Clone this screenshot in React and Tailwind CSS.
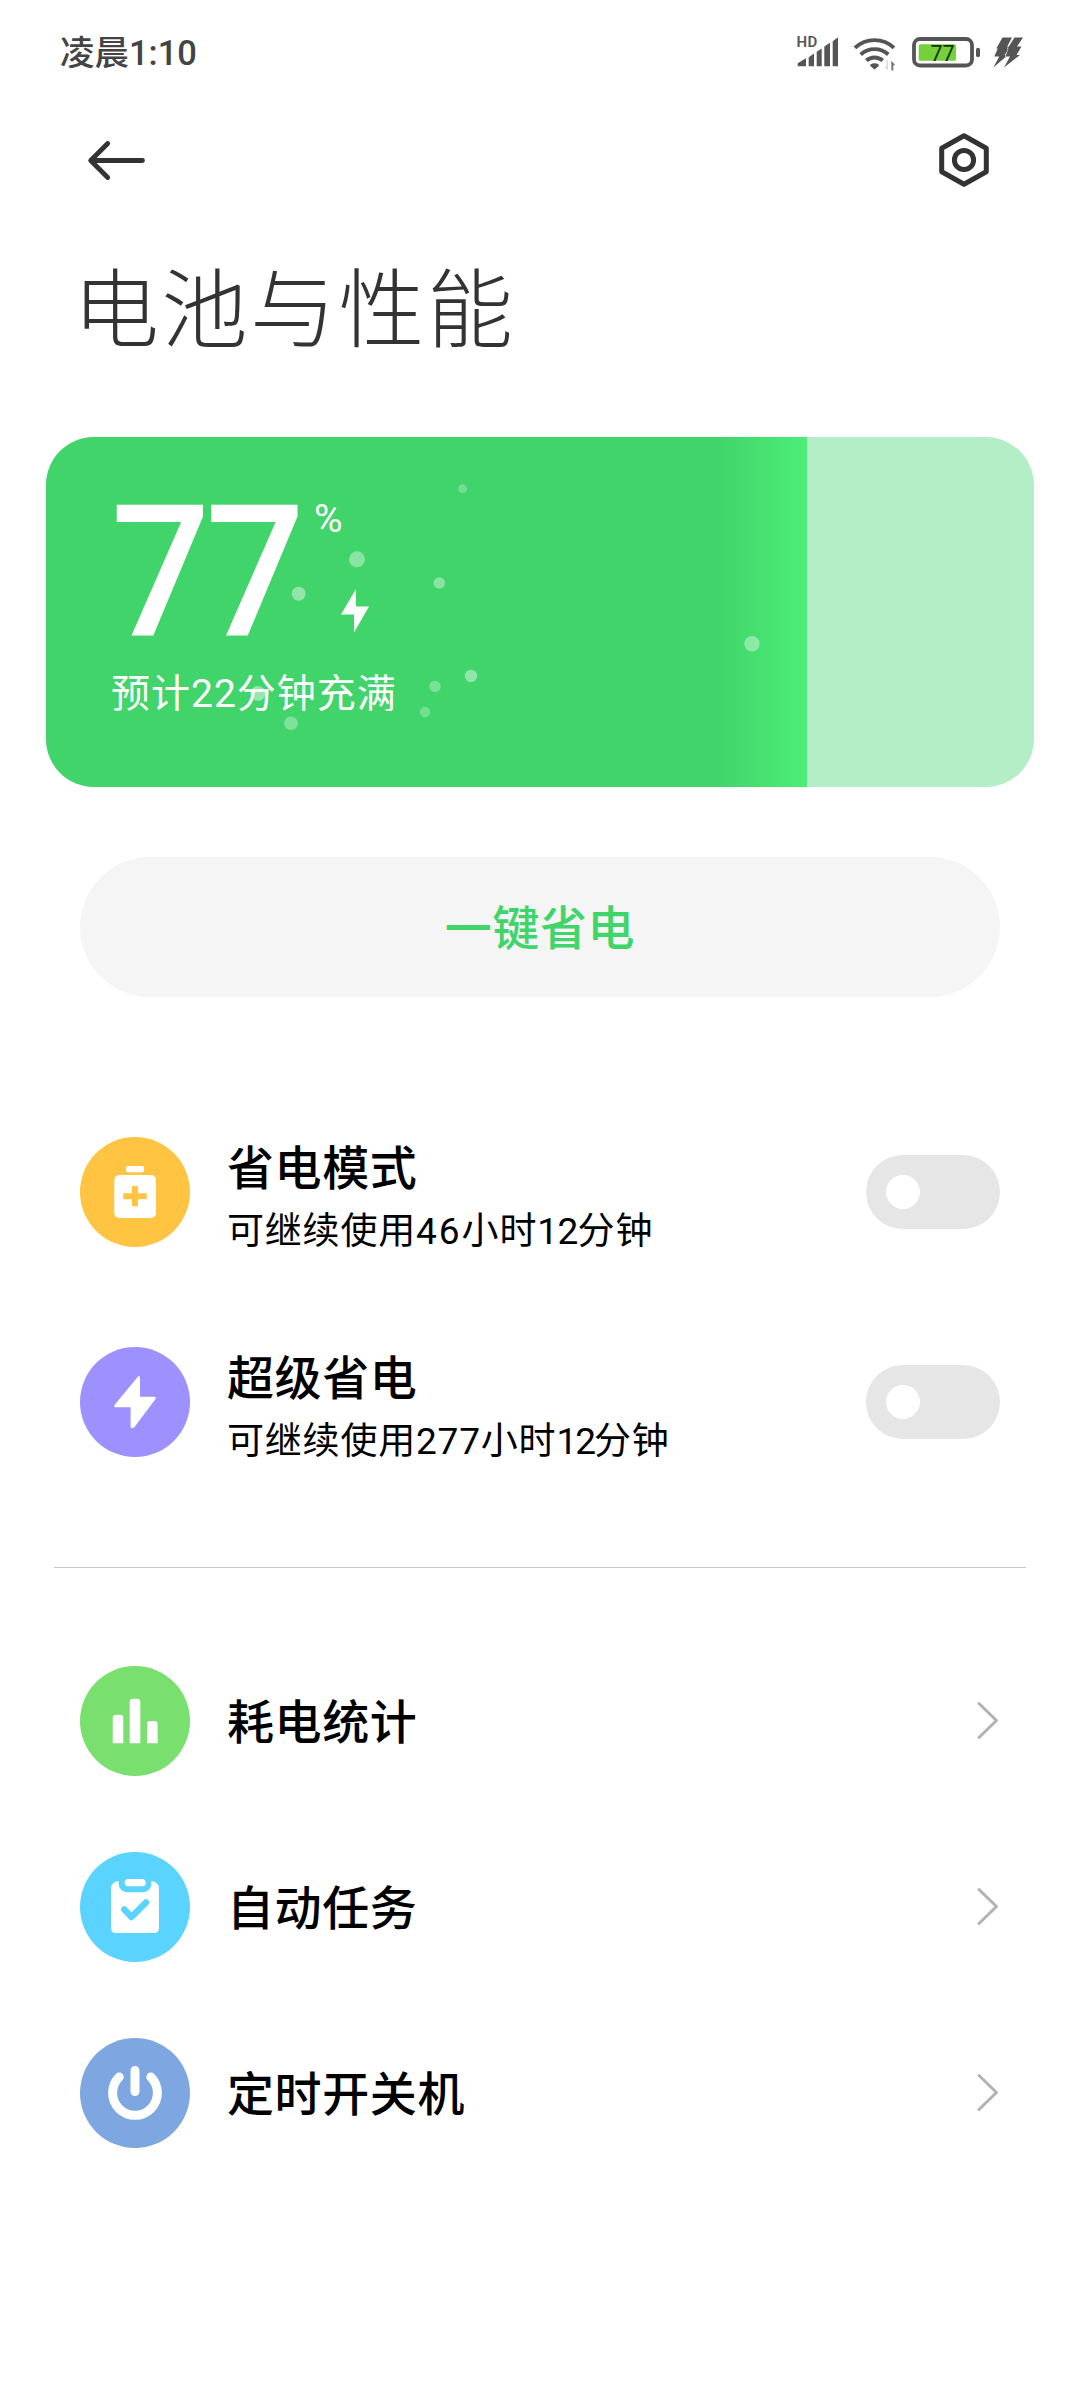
import { useState } from "react";

const BUBBLES = [
  { x: 416.7, y: 51.7, r: 4.4, o: 0.27 },
  { x: 311, y: 122.3, r: 8, o: 0.38 },
  { x: 252.7, y: 156.7, r: 7, o: 0.42 },
  { x: 393.3, y: 146, r: 5.8, o: 0.38 },
  { x: 425, y: 239, r: 6.2, o: 0.42 },
  { x: 389, y: 249.5, r: 5.8, o: 0.3 },
  { x: 379, y: 275, r: 5.2, o: 0.27 },
  { x: 245, y: 286.3, r: 6.8, o: 0.33 },
  { x: 212, y: 256.5, r: 7.4, o: 0.45 },
  { x: 706, y: 206.7, r: 7.7, o: 0.38 },
];

function StatusBar({ level }) {
  return (
    <header className="flex h-[106px] items-center justify-between pl-[60px] pr-[56px]">
      <span className="text-[34.5px] leading-none font-medium text-[#444]">凌晨1:10</span>
      <svg className="h-[60px] w-[230px]" viewBox="0 0 230 60" fill="#555">
        {/* Signal */}
        <text x="2.5" y="23.5" fontSize="15" fontWeight="600" letterSpacing="0.5">HD</text>
        <path d="M3.7 43.200v-3L12 35.200v8zM14.700 43.200V34.200L20 30.500v12.700zM22.700 43.200V28.800L27.700 25.500v17.700zM30.300 43.200V23.500L36 19.800v23.400zM38.700 43.200V18.200L44 14.200v29z" />
        {/* Wi-Fi */}
        <g fill="none" stroke="#555" strokeWidth="3.900">
          <path d="M61 24.800a28.500 28.500 0 0 1 39 0" />
          <path d="M66.700 31.500a20.500 20.500 0 0 1 27.600 0" />
          <path d="M72.300 37.500a12.500 12.500 0 0 1 16.400 0" />
        </g>
        <path d="M76.300 41.500q4.200-2.700 8.400 0v1.500L80.500 46.500 76.300 43z" />
        <path d="M93.800 37.500v10l-3.300-4h2v-6z" fill="#d5d5d5" />
        <path d="M97.300 47.500v-10l4 4.700h-2v5.300z" fill="#777" />
        {/* Battery */}
        <rect x="120" y="16" width="58" height="26.500" rx="6" fill="none" stroke="#555" strokeWidth="3.800" />
        <rect x="182" y="24.800" width="4" height="9.500" rx="2" />
        <rect x="124.700" y="21.200" width="37.300" height="16.500" rx="1.500" fill="#76d03c" />
        <text x="136.500" y="37.700" fontSize="21.500" fill="#17320a">{level}</text>
        {/* Fast charging */}
        <path d="M208.500 14.500h9.500l-4.800 9h4.300l-7 8.500h3.500L199.300 44.500l6-11h-5l3.500-8h-1.500z" />
        <path
          d="M220.500 14.500h8.500l-6 9h4.500l-5 8.500h3.500L210 44.500l6-11h-4.500l3-8h-1z"
          stroke="#fff"
          strokeWidth="1"
          paintOrder="stroke"
        />
      </svg>
    </header>
  );
}

function TitleBar() {
  return (
    <nav className="flex h-[108px] items-center justify-between pl-[84px] pr-[88px] text-[#333]">
      <button type="button" aria-label="返回">
        <svg className="h-12 w-16" viewBox="0 0 64 48" fill="none" stroke="currentColor" strokeWidth="4.8" strokeLinecap="round" strokeLinejoin="round">
          <path d="M58.500 24.500H7M23.700 7.500 6.700 24.500l17 17" />
        </svg>
      </button>
      <button type="button" aria-label="设置">
        <svg className="h-14 w-14" viewBox="0 0 56 56" fill="none" stroke="currentColor" strokeWidth="5" strokeLinejoin="round">
          <path d="M28 3.700 50.300 16.200V39.800L28 52.300 5.700 39.800V16.200z" />
          <circle cx="28" cy="28" r="9.600" />
        </svg>
      </button>
    </nav>
  );
}

function BatteryCard({ level }) {
  return (
    <section className="relative mx-[46px] mt-[67px] h-[350px] overflow-hidden rounded-[48px] bg-[#b3eec6]">
      <div
        className="absolute inset-y-0 left-0 bg-[linear-gradient(to_right,#41d46a_0,#41d46a_calc(100%-90px),#4cee78_100%)]"
        style={{ width: `${level}%` }}
      />
      <svg className="absolute inset-0 h-full w-full" viewBox="0 0 988 350" fill="#fff">
        {BUBBLES.map((b) => (
          <circle key={`${b.x}-${b.y}`} cx={b.x} cy={b.y} r={b.r} fillOpacity={b.o} />
        ))}
      </svg>
      <div className="relative flex flex-col pl-[65px] pt-[67px] text-white">
        <div className="flex h-[132px]">
          <span className="w-[201px] origin-left scale-x-[0.95] pt-[3px] text-[184px] leading-[132px] font-medium tracking-[-5px]">
            {level}
          </span>
          <div className="flex flex-col justify-between pl-[2px]">
            <span className="text-[39px] leading-[30px]">%</span>
            <svg className="mb-[3px] ml-[27px] h-[44px] w-[28px]" viewBox="0 0 28 44" fill="currentColor">
              <path d="M15 0v17.500h13L13 43.500v-18H0z" />
            </svg>
          </div>
        </div>
        <p className="mt-[33px] text-[39px] leading-[50px] tracking-[1px]">预计22分钟充满</p>
      </div>
    </section>
  );
}

function Badge({ className, children }) {
  return (
    <svg className={`h-[110px] w-[110px] shrink-0 rounded-full ${className}`} viewBox="0 0 110 110" fill="#fff">
      {children}
    </svg>
  );
}

function SwitchRow({ icon, title, detail }) {
  const [on, setOn] = useState(false);
  return (
    <div className="flex h-[210px] items-center">
      {icon}
      <div className="ml-[37px] flex-1 pt-[18px]">
        <div className="text-[47px] leading-[62px] font-medium tracking-[0.6px]">{title}</div>
        <div className="text-[37px] leading-[64px] tracking-[0.8px]">{detail}</div>
      </div>
      <button
        type="button"
        role="switch"
        aria-checked={on}
        aria-label={title}
        onClick={() => setOn(!on)}
        className={`flex h-[74px] w-[134px] items-center rounded-full px-5 ${on ? "justify-end bg-[#41d46a]" : "bg-[#e6e6e6]"}`}
      >
        <span className="h-[34px] w-[34px] rounded-full bg-white" />
      </button>
    </div>
  );
}

function LinkRow({ icon, title }) {
  return (
    <div className="flex h-[186px] items-center">
      {icon}
      <div className="ml-[37px] flex-1 pt-[4px] text-[47px] leading-[64px] font-medium tracking-[0.6px]">{title}</div>
      <svg className="h-10 w-6" viewBox="0 0 24 40" fill="none" stroke="#b2b2b2" strokeWidth="3" strokeLinecap="round" strokeLinejoin="round">
        <path d="M3 2.500 20.500 19.500 3 36.500" />
      </svg>
    </div>
  );
}

export default function App() {
  const level = 77;

  return (
    <div className="h-[2400px] w-[1080px] overflow-hidden bg-white font-[Roboto,'Noto_Sans_CJK_SC',sans-serif] text-black">
      <StatusBar level={level} />
      <TitleBar />
      <h1 className="mt-[40px] pl-[73px] text-[86px] leading-[116px] font-light tracking-[2.5px] text-[#333]">电池与性能</h1>

      <BatteryCard level={level} />

      <button
        type="button"
        className="mx-20 mt-[70px] block h-[140px] w-[920px] rounded-full bg-[#f5f5f5] pt-[5px] text-[47px] font-medium tracking-[0.6px] text-[#41d46a]"
      >
        一键省电
      </button>

      <section className="mt-[90px] px-20">
        <SwitchRow
          title="省电模式"
          detail={
            <>
              可继续使用<span className="tracking-[2px]">46</span>小时<span className="tracking-[-0.6px]">12</span>分钟
            </>
          }
          icon={
            <Badge className="bg-[#ffc542]">
              <rect x="46" y="29" width="18" height="6.300" rx="2" />
              <rect x="34.300" y="38" width="41.700" height="43" rx="5" />
              <path d="M55 49v20.300M43.300 59.200h23.400" stroke="#ffc542" strokeWidth="6" />
            </Badge>
          }
        />
        <SwitchRow
          title="超级省电"
          detail={
            <>
              可继续使用<span>277</span>小时<span className="tracking-[-2px]">12</span>分钟
            </>
          }
          icon={
            <Badge className="bg-[#9d91ff]">
              <path d="M58 29.500Q60 28 60 31V49.700H74.500Q76.500 50 75.500 52L54.500 80Q50.600 83 50.600 79V60.300H35.500Q33.500 60 34.500 58z" />
            </Badge>
          }
        />
      </section>

      <hr className="mx-[54px] mt-[60px] border-t border-[#c8c8c8]" />

      <section className="mt-[60px] px-20">
        <LinkRow
          title="耗电统计"
          icon={
            <Badge className="bg-[#79e070]">
              <path d="M32.700 77.300V52q0-3.300 3.300-3.300h4q3.300 0 3.300 3.300v25.300zM49.700 77.300V36q0-3.300 3.300-3.300h4q3.300 0 3.300 3.300v41.300zM67 77.300V58.300Q67 55 70.300 55h4q3.300 0 3.300 3.300v19z" />
            </Badge>
          }
        />
        <LinkRow
          title="自动任务"
          icon={
            <Badge className="bg-[#5ad4ff]">
              <rect x="44.700" y="27" width="21" height="7.300" rx="3.600" />
              <path d="M38.700 29v3a8.300 8.300 0 0 0 8.300 8.300h16a8.300 8.300 0 0 0 8.300-8.300v-3q7.700 1 7.700 7.500V76q0 5-5 5H36q-5 0-5-5V36.500q0-6.500 7.700-7.500z" />
              <path d="m44.300 57.500 7.200 7.500L66 50.500" fill="none" stroke="#5ad4ff" strokeWidth="6.500" strokeLinecap="round" strokeLinejoin="round" />
            </Badge>
          }
        />
        <LinkRow
          title="定时开关机"
          icon={
            <Badge className="bg-[#7ea6e0]">
              <g fill="none" stroke="#fff" strokeWidth="9" strokeLinecap="round">
                <path d="M39.200 39a22.400 22.400 0 1 0 31.600 0M55 32.500v21" />
              </g>
            </Badge>
          }
        />
      </section>
    </div>
  );
}
